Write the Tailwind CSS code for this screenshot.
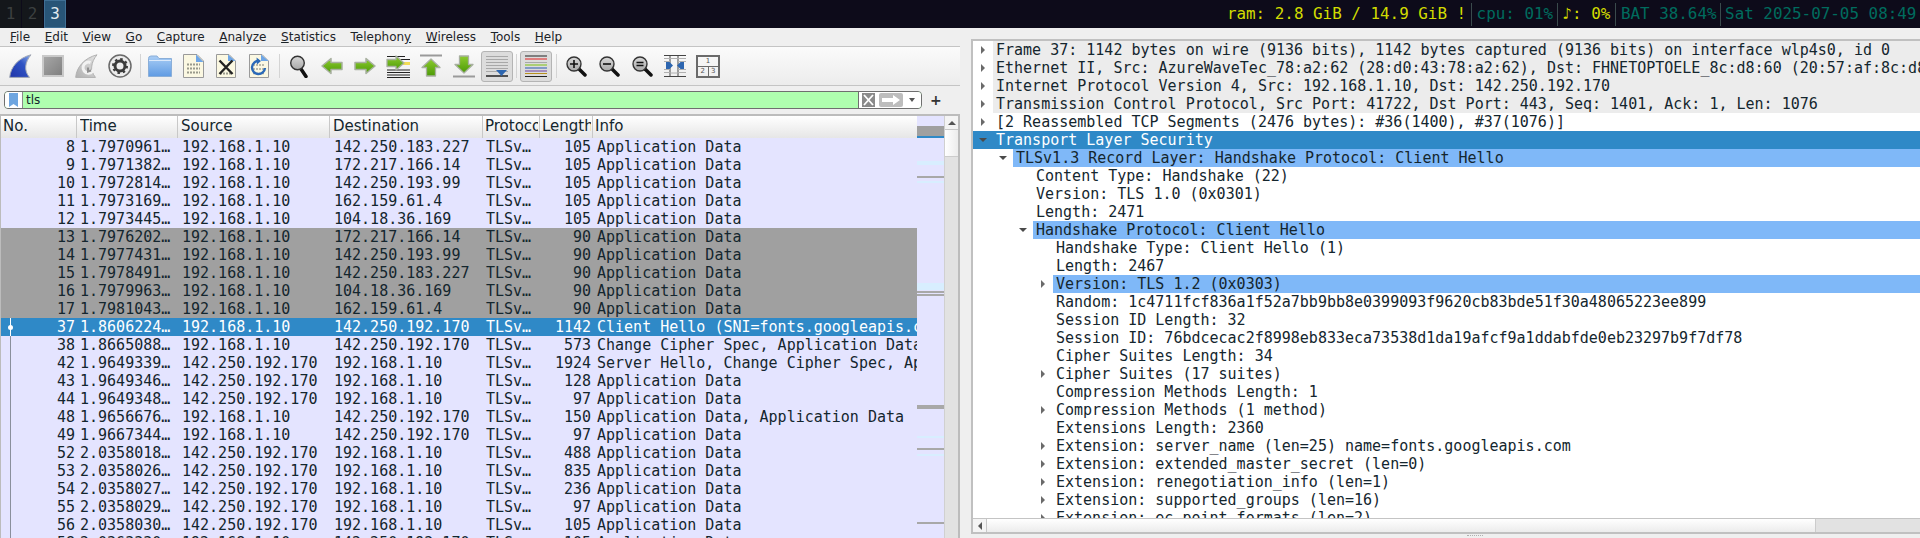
<!DOCTYPE html>
<html lang="en">
<head>
<meta charset="UTF-8">
<title>Wireshark</title>
<script src="https://cdn.jsdelivr.net/npm/@tailwindcss/browser@4"></script>
</head>
<body class="w-[1920px] h-[538px] overflow-hidden bg-[#efefef] font-['DejaVu_Sans',sans-serif] text-[#14262e]">
  <svg class="absolute w-0 h-0">
    <defs>
      <linearGradient id="fin" x1="0" y1="1" x2="1" y2="0"><stop offset="0" stop-color="#1f34a8"/><stop offset="0.6" stop-color="#2f53c4"/><stop offset="1" stop-color="#8fb0ea"/></linearGradient>
      <linearGradient id="fingray" x1="0" y1="1" x2="1" y2="0"><stop offset="0" stop-color="#b0b0b0"/><stop offset="1" stop-color="#e4e4e4"/></linearGradient>
      <linearGradient id="stop" x1="0" y1="0" x2="1" y2="1"><stop offset="0" stop-color="#a8a8a8"/><stop offset="1" stop-color="#7e7e7e"/></linearGradient>
      <linearGradient id="folder" x1="0" y1="0" x2="0" y2="1"><stop offset="0" stop-color="#a9cdf5"/><stop offset="1" stop-color="#5f9be3"/></linearGradient>
      <linearGradient id="green" x1="0" y1="0" x2="0" y2="1"><stop offset="0" stop-color="#8ccb2e"/><stop offset="1" stop-color="#4c9a06"/></linearGradient>
      <linearGradient id="lens" x1="0" y1="0" x2="0" y2="1"><stop offset="0" stop-color="#d8d8d8"/><stop offset="1" stop-color="#a8a8a8"/></linearGradient>
    </defs>
  </svg>

  <!-- status bar -->
  <div class="h-[28px] bg-[#0d0b1a] flex items-stretch font-['DejaVu_Sans_Mono',monospace] text-[15.9px] leading-[28px]">
    <div class="w-[22px] text-center text-[#3c4040] bg-[#14171b] border-r border-[#0d0b1a]">1</div>
    <div class="w-[22px] text-center text-[#3c4040] bg-[#14171b] border-r border-[#0d0b1a]">2</div>
    <div class="w-[22px] text-center text-[#e4ecf0] bg-[#285577] border border-[#3f6f94] leading-[26px]">3</div>
    <div class="flex-1"></div>
    <div class="flex items-center whitespace-pre pr-[3.6px]">
      <span class="text-[#d2dc00] pr-[4.5px]">ram: 2.8 GiB / 14.9 GiB !</span>
      <span class="w-px h-[23px] bg-[#3a4a4c]"></span>
      <span class="text-[#006b5e] pl-[5px] pr-[3.4px]">cpu: 01%</span>
      <span class="w-px h-[23px] bg-[#3a4a4c]"></span>
      <span class="text-[#d2dc00] pl-[5px] pr-[4.5px]">♪: 0%</span>
      <span class="w-px h-[23px] bg-[#3a4a4c]"></span>
      <span class="text-[#006b5e] pl-[5px] pr-[3.5px]">BAT 38.64%</span>
      <span class="w-px h-[23px] bg-[#3a4a4c]"></span>
      <span class="text-[#006b5e] pl-[4px]">Sat 2025-07-05 08:49</span>
    </div>
  </div>

  <div class="flex h-[510px]">
    <!-- left window -->
    <div class="w-[960px] shrink-0 flex flex-col">
      <!-- menu -->
      <div class="h-[18px] flex items-center pl-[10px] gap-[14.6px] text-[12px] text-[#1c2328] leading-[18px]">
        <span><u>F</u>ile</span><span><u>E</u>dit</span><span><u>V</u>iew</span><span><u>G</u>o</span><span><u>C</u>apture</span><span><u>A</u>nalyze</span><span><u>S</u>tatistics</span><span>Telephon<u>y</u></span><span><u>W</u>ireless</span><span><u>T</u>ools</span><span><u>H</u>elp</span>
      </div>

      <!-- toolbar -->
      <div class="h-[40px] flex items-center bg-gradient-to-b from-[#fbfbfb] to-[#ececec] border-y border-[#c4c4c4] pl-[9px]">
        <svg width="23" height="24" viewBox="0 0 23 24"><path d="M.7 23.4C1.500 13 9.500 4 22 .8 16 8 14.500 16.500 20.500 23.400Z" fill="url(#fin)" stroke="#a2a8b4"/></svg>
        <svg class="ml-[10px]" width="22" height="22" viewBox="0 0 22 22"><rect x="1" y="1" width="20" height="20" fill="url(#stop)" stroke="#c9c9c9" stroke-width="2"/></svg>
        <svg class="ml-[11px]" width="23" height="24" viewBox="0 0 23 24"><path d="M.7 23.4C1.500 13 9.500 4 22 .8 16 8 14.500 16.500 20.500 23.400Z" fill="url(#fingray)" stroke="#b0b0b0"/><path d="M15.500 8.500A5.500 5.500 0 1 0 19 13" fill="none" stroke="#f2f2f2" stroke-width="3"/><path d="M13 13.500v4l3-1" fill="none" stroke="#8f8f8f" stroke-width="2"/></svg>
        <svg class="ml-[10px]" width="24" height="24" viewBox="0 0 24 24"><circle cx="12" cy="12" r="11" fill="#ececec" stroke="#6a6a6a" stroke-width="1.500"/><circle cx="12" cy="12" r="5" fill="none" stroke="#3a3a3a" stroke-width="3"/><circle cx="12" cy="12" r="7" fill="none" stroke="#3a3a3a" stroke-width="2" stroke-dasharray="2.500 3"/></svg>
        <span class="ml-[8px] w-px h-[24px] bg-[#d4d4d4]"></span>
        <svg class="ml-[7px]" width="24" height="22" viewBox="0 0 24 22"><path d="M.5 3.500Q.5 1 3 1H9l2 2.500H23.500V21.500H.5Z" fill="url(#folder)" stroke="#8aaed8"/><path d="M1 5.500H23" stroke="#dbe9fa"/></svg>
        <svg class="ml-[11px]" width="21" height="24" viewBox="0 0 21 24"><path d="M.5.500H14L20.500 7V23.500H.5Z" fill="#fbf8e2" stroke="#9a9a9a"/><path d="M13 .5V8H20.500Z" fill="#6ea5e6"/><path d="M4 10.500H17M4 14.500H17M4 18.500H17" stroke="#9a9a8c" stroke-width="2" stroke-dasharray="2 1"/></svg>
        <svg class="ml-[12px]" width="20" height="24" viewBox="0 0 20 24"><path d="M.5.500H13L19.500 7V23.500H.5Z" fill="#fbf8e2" stroke="#9a9a9a"/><path d="M12 .5V7H19.500Z" fill="#6ea5e6"/><path d="M4 19.500H16" stroke="#9a9a8c" stroke-width="2" stroke-dasharray="2 1"/><path d="M3.500 6.500L16.500 20M16.500 6.500L3.500 20" stroke="#222" stroke-width="2.400"/></svg>
        <svg class="ml-[13px]" width="20" height="24" viewBox="0 0 20 24"><path d="M.5.500H13L19.500 7V23.500H.5Z" fill="#fbf8e2" stroke="#9a9a9a"/><path d="M12 .5V7H19.500Z" fill="#6ea5e6"/><path d="M4 11H16M4 15H16M4 19.500H16" stroke="#a8a89a" stroke-width="1.500" stroke-dasharray="2 1"/><path d="M10 7A6.500 6.500 0 1 0 16 14" fill="none" stroke="#2b6ab8" stroke-width="2.400"/><path d="M7.500 3.500L12 7 8 10.500Z" fill="#2b6ab8"/></svg>
        <span class="ml-[10px] w-px h-[24px] bg-[#d4d4d4]"></span>
        <svg class="ml-[10px]" width="18" height="23" viewBox="0 0 18 23"><path d="M11 14L16 21.500" stroke="#111" stroke-width="3.500" stroke-linecap="round"/><circle cx="7.500" cy="8" r="6.800" fill="url(#lens)" stroke="#333" stroke-width="1.400"/></svg>
        <svg class="ml-[13px]" width="22" height="18" viewBox="0 0 22 18"><path d="M1 9L10 1.500V5.500H21V12.500H10V16.500Z" fill="url(#green)" stroke="#a8b0a0" stroke-width="1.500" stroke-linejoin="round"/></svg>
        <svg class="ml-[11px]" width="22" height="18" viewBox="0 0 22 18"><path d="M21 9L12 1.500V5.500H1V12.500H12V16.500Z" fill="url(#green)" stroke="#a8b0a0" stroke-width="1.500" stroke-linejoin="round"/></svg>
        <svg class="ml-[10px]" width="24" height="24" viewBox="0 0 24 24"><path d="M1 2.500H19M1 21H24M1 18.500H24M1 16H24M1 23.500H24M14 5.500H24M16 8.500H24" stroke="#222"/><path d="M15 8H24V11H15Z" fill="#f2dc55"/><path d="M18 9L10 2V5.500H1V12.500H10V16Z" fill="url(#green)" stroke="#a8b0a0" stroke-width="1.300" stroke-linejoin="round"/></svg>
        <svg class="ml-[10px]" width="22" height="24" viewBox="0 0 22 24"><path d="M0 1.500H22" stroke="#9a9a9a" stroke-width="2"/><path d="M11 5L20 13.500H15.500V22H6.500V13.500H2Z" fill="url(#green)" stroke="#a8b0a0" stroke-width="1.300" stroke-linejoin="round"/></svg>
        <svg class="ml-[11px]" width="22" height="24" viewBox="0 0 22 24"><path d="M0 22.500H22" stroke="#9a9a9a" stroke-width="2"/><path d="M11 19L20 10.500H15.500V2H6.500V10.500H2Z" fill="url(#green)" stroke="#a8b0a0" stroke-width="1.300" stroke-linejoin="round"/></svg>
        <div class="ml-[6px] w-[32px] h-[31px] rounded-[3px] bg-[#dcdcdc] border border-[#b4b4b4] flex items-center justify-center">
          <svg width="22" height="22" viewBox="0 0 22 22"><path d="M0 1.500H22M0 4.500H22M0 7.500H22M0 10.500H22M0 13.500H22M0 16.500H22" stroke="#a8a8a8"/><path d="M0 21H22" stroke="#222" stroke-width="1.500"/><path d="M10 15H21L15.500 21Z" fill="#2d66b0"/></svg>
        </div>
        <span class="ml-[3px] w-px h-[24px] bg-[#d4d4d4]"></span>
        <div class="ml-[3px] w-[32px] h-[31px] rounded-[3px] bg-[#dcdcdc] border border-[#b4b4b4] flex items-center justify-center">
          <svg width="22" height="22" viewBox="0 0 22 22"><path d="M0 1H22" stroke="#222"/><path d="M0 4H22" stroke="#e02020"/><path d="M0 7.500H22" stroke="#a8a8a8"/><path d="M0 10H22" stroke="#7cc010"/><path d="M0 13H22" stroke="#2a58b0"/><path d="M0 16H22" stroke="#6a3fa0"/><path d="M0 18.500H22" stroke="#b89020"/><path d="M0 21.500H22" stroke="#222"/></svg>
        </div>
        <span class="ml-[4px] w-px h-[24px] bg-[#d4d4d4]"></span>
        <svg class="ml-[9px]" width="21" height="21" viewBox="0 0 21 21"><path d="M13 13L19 19" stroke="#111" stroke-width="3.500" stroke-linecap="round"/><circle cx="8" cy="8" r="7" fill="url(#lens)" stroke="#333" stroke-width="1.400"/><path d="M4 8H12M8 4V12" stroke="#111" stroke-width="1.600"/></svg>
        <svg class="ml-[12px]" width="21" height="21" viewBox="0 0 21 21"><path d="M13 13L19 19" stroke="#111" stroke-width="3.500" stroke-linecap="round"/><circle cx="8" cy="8" r="7" fill="url(#lens)" stroke="#333" stroke-width="1.400"/><path d="M4 8H12" stroke="#111" stroke-width="1.600"/></svg>
        <svg class="ml-[12px]" width="21" height="21" viewBox="0 0 21 21"><path d="M13 13L19 19" stroke="#111" stroke-width="3.500" stroke-linecap="round"/><circle cx="8" cy="8" r="7" fill="url(#lens)" stroke="#333" stroke-width="1.400"/><path d="M4.500 6.500H11.500M4.500 9.500H11.500" stroke="#111" stroke-width="1.400"/></svg>
        <svg class="ml-[11px]" width="22" height="22" viewBox="0 0 22 22"><path d="M0 .5H22M0 21.500H22M6 0V22M14 0V22" stroke="#444"/><path d="M0 3.500H6M14 3.500H22M0 6.500H6M14 6.500H22M0 14.500H6M14 14.500H22M0 17.500H6M14 17.500H22M6 3.500H14M6 18H14" stroke="#b0b0b0"/><path d="M2 7H5.500L9 10.500 5.500 14H2ZM20 7H16.500L13 10.500 16.500 14H20Z" fill="#2d66b0"/></svg>
        <div class="ml-[10px] w-[24px] h-[23px] border-2 border-[#6a6a6a] flex flex-col text-[7px] leading-none text-[#555]">
          <div class="h-[10px] flex items-center justify-center border-b border-[#6a6a6a]">1</div>
          <div class="flex-1 flex"><span class="flex-1 flex items-center justify-center border-r border-[#6a6a6a]">2</span><span class="flex-1 flex items-center justify-center">3</span></div>
        </div>
      </div>

      <!-- filter -->
      <div class="h-[28px] pl-[4px] flex items-center">
        <div class="w-[918px] h-[18px] border border-[#6f6f6f] rounded-[4px] bg-[#afffaf] flex items-center text-[12px] overflow-hidden">
          <span class="w-[18px] h-full bg-white border-r border-[#8a8a8a] flex items-center justify-center">
            <svg width="9" height="14" viewBox="0 0 9 14"><path d="M0 0H9V14L4.500 11 0 14Z" fill="#6ea5e0"/></svg>
          </span>
          <span class="pl-[3px]">tls</span>
          <span class="flex-1"></span>
          <span class="w-[63px] h-full bg-white border-l border-[#6f6f6f] flex items-center pl-[3px]">
            <svg width="13" height="14" viewBox="0 0 13 14"><rect width="13" height="14" fill="#8a8a8a"/><path d="M2 2L11 12M11 2L2 12" stroke="#fff" stroke-width="1.800"/></svg>
            <span class="ml-[4px] w-[24px] h-[14px] bg-[#bdbdbd] rounded-[2px] flex items-center justify-center">
              <svg width="18" height="10" viewBox="0 0 18 10"><path d="M0 3H11V0L18 5 11 10V7H0Z" fill="#fff"/></svg>
            </span>
            <svg class="ml-[6px]" width="6" height="4" viewBox="0 0 6 4"><path d="M0 0H6L3 4Z" fill="#555"/></svg>
          </span>
        </div>
        <span class="ml-[8px] text-[14px] font-bold leading-none text-[#333]">+</span>
      </div>

      <!-- packet list -->
      <div class="flex-1 min-h-0 flex border-t-2 border-l border-r-2 border-[#bcbcbc] overflow-hidden">
        <div class="w-[916px] shrink-0">
          <div class="h-[22px] flex text-[15px] leading-[21px] bg-gradient-to-b from-[#ffffff] to-[#e6e6e6] whitespace-pre">
            <div class="w-[76px] border-r border-[#c8c8c8] pl-[2px]"><span class="block overflow-hidden">No.</span></div>
            <div class="w-[101px] border-r border-[#c8c8c8] pl-[3px]"><span class="block overflow-hidden">Time</span></div>
            <div class="w-[152px] border-r border-[#c8c8c8] pl-[3px]"><span class="block overflow-hidden">Source</span></div>
            <div class="w-[153px] border-r border-[#c8c8c8] pl-[3px]"><span class="block overflow-hidden">Destination</span></div>
            <div class="w-[57px] border-r border-[#c8c8c8] pl-[2px] pr-[1px]"><span class="block overflow-hidden">Protocol</span></div>
            <div class="w-[53px] border-r border-[#c8c8c8] pl-[2px] pr-[1px]"><span class="block overflow-hidden">Length</span></div>
            <div class="flex-1 pl-[2px]">Info</div>
          </div>
          <div id="rows" class="font-['DejaVu_Sans_Mono',monospace] text-[15px] leading-[18px] whitespace-pre"></div>
        </div>

        <!-- minimap -->
        <div class="w-[27px] shrink-0 relative bg-[#e4e4ff]">
          <div class="h-[10px]"></div>
          <div class="h-[10px] bg-[#a0a0a0]"></div>
          <div class="h-[2px] bg-[#2f89c7]"></div>
          <div class="h-[23px]"></div>
          <div class="h-[4px] bg-[#d8eeff]"></div>
          <div class="h-[11px]"></div>
          <div class="h-[2px] bg-[#a8a8a8]"></div>
          <div class="h-[3px]"></div>
          <div class="h-[2px] bg-[#d8eeff]"></div>
          <div class="h-[100px]"></div>
          <div class="h-[7px] bg-[#d8eeff]"></div>
          <div class="h-px"></div>
          <div class="h-[2px] bg-[#a8a8a8]"></div>
          <div class="h-px"></div>
          <div class="h-[2px] bg-[#a8a8a8]"></div>
          <div class="h-[109px]"></div>
          <div class="h-[4px] bg-[#a8a8a8]"></div>
          <div class="h-[27px]"></div>
          <div class="h-[2px] bg-[#d8eeff]"></div>
          <div class="h-[10px]"></div>
          <div class="h-[2px] bg-[#a8a8a8]"></div>
          <div class="h-[4px]"></div>
          <div class="h-[2px] bg-[#d8eeff]"></div>
          <div class="h-[66px]"></div>
          <div class="h-[2px] bg-[#a8a8a8]"></div>
        </div>

        <!-- vertical scrollbar -->
        <div class="flex-1 flex flex-col bg-[#e2e2e2] border-l border-[#d0d0d0]">
          <div class="h-[14px] bg-[#f4f4f4] border-b border-[#c8c8c8] flex items-center justify-center">
            <svg width="8" height="4" viewBox="0 0 8 4"><path d="M0 4H8L4 0Z" fill="#555"/></svg>
          </div>
          <div class="h-[27px] bg-gradient-to-r from-[#ffffff] to-[#ececec] border-b border-[#cccccc]"></div>
        </div>
      </div>
    </div>

    <!-- right window -->
    <div class="flex-1 flex flex-col pl-[11px] pr-[11px] pt-[11px]">
      <div class="h-[495px] shrink-0 border-2 border-[#c0c0c0] bg-white flex flex-col">
        <div class="flex-1 min-h-0 flex">
          <div id="tree" class="flex-1 min-w-0 overflow-hidden font-['DejaVu_Sans_Mono',monospace] text-[15px] leading-[18px] whitespace-pre"></div>
          <div class="w-[14px] shrink-0 flex flex-col bg-[#e2e2e2] border-l border-[#c8c8c8]">
            <div class="h-[14px] bg-[#f4f4f4] border-b border-[#c8c8c8] flex items-center justify-center">
              <svg width="8" height="4" viewBox="0 0 8 4"><path d="M0 4H8L4 0Z" fill="#555"/></svg>
            </div>
            <div class="h-[265px] bg-gradient-to-r from-[#ffffff] to-[#ececec] border-b border-[#c4c4c4]"></div>
            <div class="flex-1"></div>
            <div class="h-[14px] bg-[#f4f4f4] border-t border-[#c8c8c8] flex items-center justify-center">
              <svg width="8" height="4" viewBox="0 0 8 4"><path d="M0 0H8L4 4Z" fill="#555"/></svg>
            </div>
          </div>
        </div>
        <div class="h-[14px] shrink-0 flex bg-[#e2e2e2] border-t border-[#c4c4c4]">
          <div class="w-[14px] bg-[#f4f4f4] border-r border-[#c8c8c8] flex items-center justify-center">
            <svg width="4" height="8" viewBox="0 0 4 8"><path d="M4 0V8L0 4Z" fill="#555"/></svg>
          </div>
          <div class="w-[829px] bg-gradient-to-b from-[#ffffff] to-[#ececec] border-r border-[#cccccc]"></div>
          <div class="flex-1"></div>
          <div class="w-[14px] bg-[#f4f4f4] border-x border-[#c8c8c8] flex items-center justify-center">
            <svg width="4" height="8" viewBox="0 0 4 8"><path d="M0 0V8L4 4Z" fill="#555"/></svg>
          </div>
          <div class="w-[14px] bg-[#efefef]"></div>
        </div>
      </div>
      <div class="w-[16px] mx-auto mt-[1px] border-t border-dotted border-[#b0b0b0]"></div>
    </div>
  </div>

  <script>
    const AD = 'Application Data';
    const a = '192.168.1.10', g = '142.250.192.170';
    // no, time, src, dst, len, info, kind
    const packets = [
      ['8', '1.7970961…', a, '142.250.183.227', '105', AD, ''],
      ['9', '1.7971382…', a, '172.217.166.14', '105', AD, ''],
      ['10', '1.7972814…', a, '142.250.193.99', '105', AD, ''],
      ['11', '1.7973169…', a, '162.159.61.4', '105', AD, ''],
      ['12', '1.7973445…', a, '104.18.36.169', '105', AD, ''],
      ['13', '1.7976202…', a, '172.217.166.14', '90', AD, 'gray'],
      ['14', '1.7977431…', a, '142.250.193.99', '90', AD, 'gray'],
      ['15', '1.7978491…', a, '142.250.183.227', '90', AD, 'gray'],
      ['16', '1.7979963…', a, '104.18.36.169', '90', AD, 'gray'],
      ['17', '1.7981043…', a, '162.159.61.4', '90', AD, 'gray'],
      ['37', '1.8606224…', a, g, '1142', 'Client Hello (SNI=fonts.googleapis.com)', 'sel'],
      ['38', '1.8665088…', a, g, '573', 'Change Cipher Spec, Application Data', ''],
      ['42', '1.9649339…', g, a, '1924', 'Server Hello, Change Cipher Spec, Application Data', ''],
      ['43', '1.9649346…', g, a, '128', AD, ''],
      ['44', '1.9649348…', g, a, '97', AD, ''],
      ['48', '1.9656676…', a, g, '150', 'Application Data, Application Data', ''],
      ['49', '1.9667344…', a, g, '97', AD, ''],
      ['52', '2.0358018…', g, a, '488', AD, ''],
      ['53', '2.0358026…', g, a, '835', AD, ''],
      ['54', '2.0358027…', g, a, '236', AD, ''],
      ['55', '2.0358029…', g, a, '97', AD, ''],
      ['56', '2.0358030…', g, a, '105', AD, ''],
      ['58', '2.0363330…', a, g, '105', AD, '']
    ];
    const rowBg = { '': 'bg-[#e4e4ff]', gray: 'bg-[#a0a0a0]', sel: 'bg-[#2f89c7] text-white' };
    document.getElementById('rows').innerHTML = packets.map((p, i) => {
      let mark = '';
      if (i >= 10) {
        mark = p[6] === 'sel'
          ? '<span class="absolute left-[9px] top-0 w-px h-full bg-white"></span><span class="absolute left-[7px] top-[7px] w-[5px] h-[5px] rounded-full bg-white"></span>'
          : '<span class="absolute left-[9px] top-0 w-px h-full bg-[#8a8f9c]"></span>';
      }
      return `<div class="relative h-[18px] flex overflow-hidden ${rowBg[p[6]]}">${mark}
        <div class="w-[76px] pr-[2px] text-right">${p[0]}</div>
        <div class="w-[101px] pl-[3px] overflow-hidden">${p[1]}</div>
        <div class="w-[152px] pl-[4px] overflow-hidden">${p[2]}</div>
        <div class="w-[153px] pl-[4px] overflow-hidden">${p[3]}</div>
        <div class="w-[57px] pl-[3px] overflow-hidden">TLSv…</div>
        <div class="w-[53px] pr-[2px] text-right">${p[4]}</div>
        <div class="flex-1 pl-[4px] overflow-hidden">${p[5]}</div>
      </div>`;
    }).join('');

    // [level, arrow, text, style]
    const tree = [
      [0, 'r', 'Frame 37: 1142 bytes on wire (9136 bits), 1142 bytes captured (9136 bits) on interface wlp4s0, id 0', 'gray'],
      [0, 'r', 'Ethernet II, Src: AzureWaveTec_78:a2:62 (28:d0:43:78:a2:62), Dst: FHNETOPTOELE_8c:d8:60 (20:57:af:8c:d8:60)', 'gray'],
      [0, 'r', 'Internet Protocol Version 4, Src: 192.168.1.10, Dst: 142.250.192.170', 'gray'],
      [0, 'r', 'Transmission Control Protocol, Src Port: 41722, Dst Port: 443, Seq: 1401, Ack: 1, Len: 1076', 'gray'],
      [0, 'r', '[2 Reassembled TCP Segments (2476 bytes): #36(1400), #37(1076)]', ''],
      [0, 'd', 'Transport Layer Security', 'sel'],
      [1, 'd', 'TLSv1.3 Record Layer: Handshake Protocol: Client Hello', 'hi'],
      [2, '', 'Content Type: Handshake (22)', ''],
      [2, '', 'Version: TLS 1.0 (0x0301)', ''],
      [2, '', 'Length: 2471', ''],
      [2, 'd', 'Handshake Protocol: Client Hello', 'hi'],
      [3, '', 'Handshake Type: Client Hello (1)', ''],
      [3, '', 'Length: 2467', ''],
      [3, 'r', 'Version: TLS 1.2 (0x0303)', 'hi'],
      [3, '', 'Random: 1c4711fcf836a1f52a7bb9bb8e0399093f9620cb83bde51f30a48065223ee899', ''],
      [3, '', 'Session ID Length: 32', ''],
      [3, '', 'Session ID: 76bdcecac2f8998eb833eca73538d1da19afcf9a1ddabfde0eb23297b9f7df78', ''],
      [3, '', 'Cipher Suites Length: 34', ''],
      [3, 'r', 'Cipher Suites (17 suites)', ''],
      [3, '', 'Compression Methods Length: 1', ''],
      [3, 'r', 'Compression Methods (1 method)', ''],
      [3, '', 'Extensions Length: 2360', ''],
      [3, 'r', 'Extension: server_name (len=25) name=fonts.googleapis.com', ''],
      [3, 'r', 'Extension: extended_master_secret (len=0)', ''],
      [3, 'r', 'Extension: renegotiation_info (len=1)', ''],
      [3, 'r', 'Extension: supported_groups (len=16)', ''],
      [3, 'r', 'Extension: ec_point_formats (len=2)', '']
    ];
    const slot = ['w-[20px]', 'w-[40px]', 'w-[60px]', 'w-[80px]'];
    const arrows = {
      r: '<svg width="10" height="10" viewBox="0 0 10 10"><path d="M3 1V9L7 5Z" fill="#6a6a6a"/></svg>',
      d: '<svg width="10" height="10" viewBox="0 0 10 10"><path d="M1 3H9L5 7Z" fill="#4a4a4a"/></svg>',
      '': ''
    };
    const textBg = { '': '', gray: 'bg-[#ececec]', hi: 'bg-[#7fb8f8]', sel: 'text-white' };
    document.getElementById('tree').innerHTML = tree.map(t =>
      `<div class="h-[18px] flex ${t[3] === 'sel' ? 'bg-[#2f89c7]' : ''}">
        <span class="${slot[t[0]]} shrink-0 flex items-center justify-end pr-[5px]">${arrows[t[1]]}</span>
        <span class="flex-1 min-w-0 overflow-hidden pl-[3px] ${textBg[t[3]]}">${t[2]}</span>
      </div>`).join('');
  </script>
</body>
</html>
